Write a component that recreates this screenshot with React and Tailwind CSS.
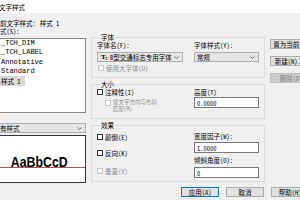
const cjk = "font-['Noto_Sans_Mono_CJK_SC','Noto_Sans_CJK_SC',sans-serif]";

const Chevron = () => (
  <svg width="5" height="3" viewBox="0 0 5 3" className="shrink-0">
    <path d="M0.4 0.4 L2.5 2.5 L4.6 0.4" stroke="#555" strokeWidth="0.8" fill="none" />
  </svg>
);

const Combo = ({ children, className = "" }) => (
  <div
    className={`flex items-center h-[10px] border border-[#adadad] bg-[#e5e5e5] pl-[2px] pr-[3px] ${className}`}
  >
    <div className="flex-1 flex items-center overflow-hidden whitespace-nowrap">
      {children}
    </div>
    <Chevron />
  </div>
);

const Check = ({ label, disabled, className = "" }) => (
  <div className={`flex items-center h-[8px] gap-[2px] ${className}`}>
    <span
      className={`w-[6px] h-[6px] shrink-0 bg-white border ${
        disabled ? "border-[#c4c4c4]" : "border-[#333]"
      }`}
    />
    <span className={disabled ? "text-[#8c8c8c]" : "text-black"}>{label}</span>
  </div>
);

const Field = ({ value, className = "" }) => (
  <div
    className={`h-[11px] border border-[#7a7a7a] bg-white pl-[2px] flex items-center ${className}`}
  >
    {value}
  </div>
);

const Group = ({ title, children, className = "" }) => (
  <fieldset className={`border border-[#dcdcdc] px-[5px] ${className}`}>
    <legend className="ml-[3px] px-[1px] leading-[8px]">{title}</legend>
    {children}
  </fieldset>
);

const Btn = ({ children, disabled, primary, className = "" }) => (
  <div
    className={`h-[10px] shrink-0 flex items-center justify-center whitespace-nowrap border ${
      disabled
        ? "bg-[#cccccc] border-[#bfbfbf] text-[#838383]"
        : primary
          ? "bg-[#e1e1e1] border-[#0078d7]"
          : "bg-[#e1e1e1] border-[#adadad]"
    } ${className}`}
  >
    {children}
  </div>
);

const styles = ["_TCH_DIM", "_TCH_LABEL", "Annotative", "Standard"];

export default function App() {
  return (
    <div
      className={`w-[300px] h-[200px] overflow-hidden bg-[#f0f0f0] text-[6.5px] leading-[8px] font-medium text-black ${cjk}`}
    >
      {/* title bar */}
      <div className="h-[13px] bg-white flex items-center">
        <span className="ml-[-1px]">文字样式</span>
      </div>

      {/* current style */}
      <div className="mt-[6px] ml-[-6.5px] h-[8px] flex whitespace-nowrap">
        <span>当前文字样式:</span>
        <span className="ml-[4px]">样式 1</span>
      </div>

      <div className="flex">
        {/* left column */}
        <div className="ml-[-7px] w-[93px] shrink-0 flex flex-col">
          <div className="h-[8px] ml-[0.5px]">样式(S):</div>
          <div className="mt-[3px] h-[75px] border border-[#828790] bg-white pl-[7px] text-[7px] leading-[9.4px] font-normal font-['Liberation_Mono',monospace]">
            {styles.map((s) => (
              <div key={s}>{s}</div>
            ))}
            <div className={`${cjk} text-[6.5px] font-medium`}>
              <span className="bg-[#d9d9d9] pl-[1px] pr-[4px] ml-[-1px]">样式 1</span>
            </div>
          </div>
          <Combo className="mt-[10px]">
            <span className="ml-[-2.5px]">所有样式</span>
          </Combo>
          <div className="mt-[2px] h-[48px] border border-[#333] bg-white flex flex-col">
            <div className="pt-[19px] flex justify-center">
              <span className="text-[14px] leading-[14px] font-semibold font-['Liberation_Sans',sans-serif] scale-x-[0.88]">
                AaBbCcD
              </span>
            </div>
            <div className="mt-[-2px] h-px bg-[#c0504d]" />
          </div>
        </div>

        {/* middle column */}
        <div className="ml-[5px] w-[173px] shrink-0 mt-[6px]">
          <Group title="字体" className="pb-[5px]">
            <div className="grid grid-cols-[86px_65px] gap-x-[11px]">
              <div>
                <div className="h-[8px]">字体名(F):</div>
                <Combo className="mt-[3px]">
                  <span className="flex items-end ml-[1px] mr-[2px] font-['Liberation_Serif',serif] font-bold leading-none">
                    <span className="text-[7px]">T</span>
                    <span className="text-[5px] ml-[-1px] text-[#555]">T</span>
                  </span>
                  <span>B型交通标志专用字体</span>
                </Combo>
                <Check label="使用大字体(U)" disabled className="mt-[2px] ml-[1px]" />
              </div>
              <div>
                <div className="h-[8px]">字体样式(Y):</div>
                <Combo className="mt-[3px]">
                  <span>常规</span>
                </Combo>
              </div>
            </div>
          </Group>

          <Group title="大小" className="mt-[2px] pb-[6px]">
            <div className="grid grid-cols-[86px_65px] gap-x-[11px]">
              <div>
                <Check label="注释性(I)" />
                <div className="mt-[3px] ml-[8px] flex items-start gap-[2px]">
                  <span className="mt-[1px] w-[6px] h-[6px] shrink-0 bg-white border border-[#c4c4c4]" />
                  <span className="text-[5.5px] leading-[6.5px] text-[#8c8c8c] whitespace-nowrap">
                    使文字方向与布局
                    <br />
                    匹配(M)
                  </span>
                </div>
              </div>
              <div>
                <div className="h-[8px]">高度(T)</div>
                <Field value="0.0000" className="mt-[1px]" />
              </div>
            </div>
          </Group>

          <Group title="效果" className="mt-[2px] pb-[3px]">
            <div className="grid grid-cols-[86px_65px] gap-x-[11px]">
              <div>
                <Check label="颠倒(E)" className="mt-[4px]" />
                <Check label="反向(K)" className="mt-[8px]" />
                <Check label="垂直(V)" disabled className="mt-[10px]" />
              </div>
              <div>
                <div className="h-[8px] mt-[3px]">宽度因子(W):</div>
                <Field value="1.0000" className="mt-[2px]" />
                <div className="h-[8px] mt-[3px]">倾斜角度(O):</div>
                <Field value="0" className="mt-[3px]" />
              </div>
            </div>
          </Group>
        </div>

        {/* right buttons */}
        <div className="ml-[6px] w-[42px] shrink-0 mt-[12px] flex flex-col">
          <Btn>置为当前(C)</Btn>
          <Btn className="mt-[7px]">新建(N)...</Btn>
          <Btn disabled className="mt-[7px]">
            删除(D)
          </Btn>
        </div>
      </div>

      {/* bottom buttons */}
      <div className="mt-[4px] flex pl-[181px] gap-[7px]">
        <Btn primary className="w-[38px]">
          应用(A)
        </Btn>
        <Btn className="w-[38px]">取消</Btn>
        <Btn className="w-[38px]">帮助(H)</Btn>
      </div>
    </div>
  );
}
